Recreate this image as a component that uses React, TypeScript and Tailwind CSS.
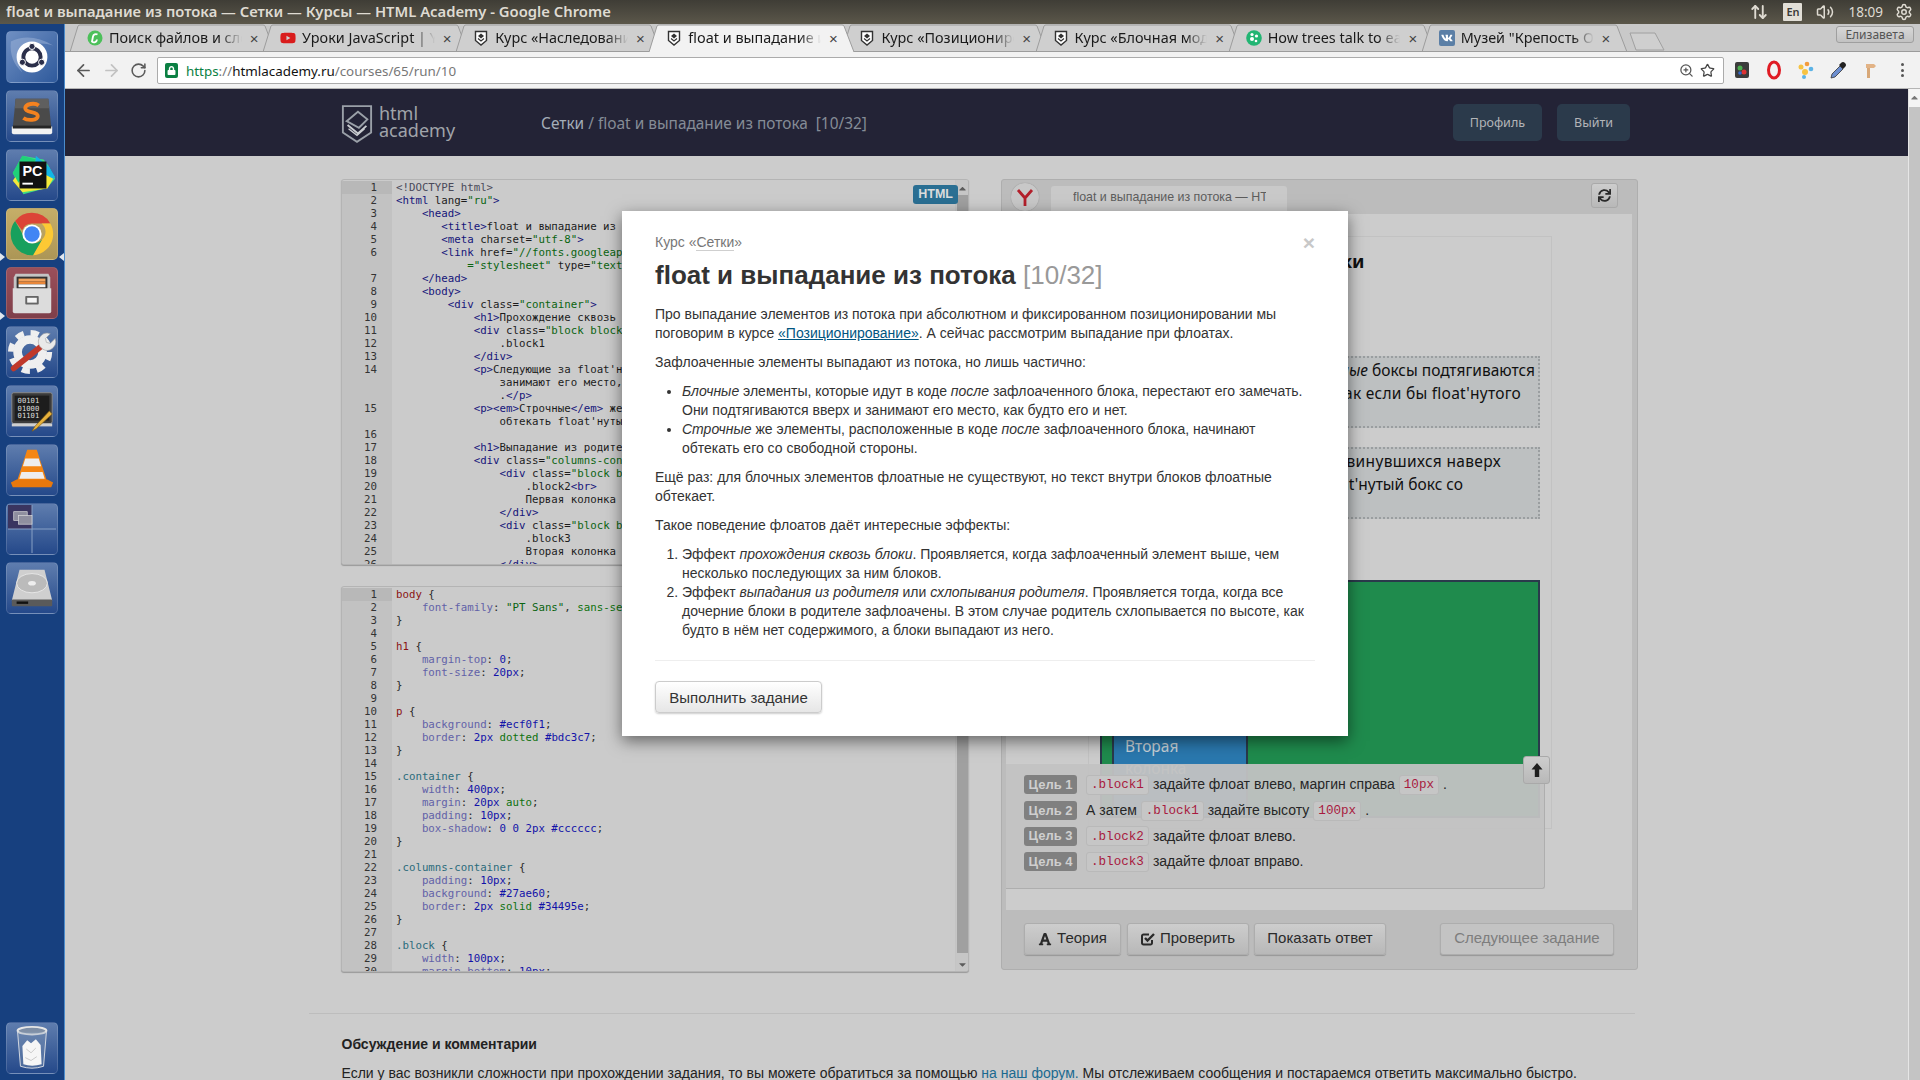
import React from "react";
import { ArrowLeft, ArrowRight, RotateCw, ZoomIn, Star, Volume2, Settings, ArrowUpDown } from "lucide-react";
import { FaFont, FaSync, FaCaretUp, FaCaretDown, FaLock, FaVk, FaYoutube } from "react-icons/fa";

type Tok = [string, string];
const tg = "text-[#15157a]", at = "text-[#1c1c1c]", st = "text-[#0a6410]", tx = "text-[#1c1c1c]";
const pr = "text-[#6262a8]", vl = "text-[#1212a8]", se = "text-[#8a1414]", cl = "text-[#2c6c7c]", kw = "text-[#0e720e]", br = "text-[#2a2a2a]";

type Line = { n: number | null; t: Tok[] };
const L = (n: number | null, ...t: Tok[]): Line => ({ n, t });

const htmlLines: Line[] = [
  L(1, ["<!DOCTYPE html>", "text-[#4a4a5a]"]),
  L(2, ['<html ', tg], ['lang=', at], ['"ru"', st], ['>', tg]),
  L(3, ['    <head>', tg]),
  L(4, ['       <title>', tg], ['float и выпадание из потока', tx], ['</title>', tg]),
  L(5, ['       <meta ', tg], ['charset=', at], ['"utf-8"', st], ['>', tg]),
  L(6, ['       <link ', tg], ['href=', at], ['"//fonts.googleapis.com/css"', st], [' rel', at]),
  L(null, ['           ', tx], ['="stylesheet" ', st], ['type=', at], ['"text/css"', st], ['>', tg]),
  L(7, ['    </head>', tg]),
  L(8, ['    <body>', tg]),
  L(9, ['        <div ', tg], ['class=', at], ['"container"', st], ['>', tg]),
  L(10, ['            <h1>', tg], ['Прохождение сквозь блоки', tx], ['</h1>', tg]),
  L(11, ['            <div ', tg], ['class=', at], ['"block block1"', st], ['>', tg]),
  L(12, ['                .block1', tx]),
  L(13, ['            </div>', tg]),
  L(14, ['            <p>', tg], ["Следующие за float'нутым блоки", tx]),
  L(null, ['                занимают его место, как будто', tx]),
  L(null, ['                .', tx], ['</p>', tg]),
  L(15, ['            <p><em>', tg], ['Строчные', tx], ['</em>', tg], [' же элементы', tx]),
  L(null, ["                обтекать float'нутый бокс", tx]),
  L(16),
  L(17, ['            <h1>', tg], ['Выпадание из родителя', tx], ['</h1>', tg]),
  L(18, ['            <div ', tg], ['class=', at], ['"columns-container"', st], ['>', tg]),
  L(19, ['                <div ', tg], ['class=', at], ['"block block2"', st], ['>', tg]),
  L(20, ['                    .block2', tx], ['<br>', tg]),
  L(21, ['                    Первая колонка', tx]),
  L(22, ['                </div>', tg]),
  L(23, ['                <div ', tg], ['class=', at], ['"block block3"', st], ['>', tg]),
  L(24, ['                    .block3', tx]),
  L(25, ['                    Вторая колонка', tx]),
  L(26, ['                </div>', tg]),
];

const P = (name: string, ...v: Tok[]): Tok[] => [["    " + name, pr], [": ", br], ...v, [";", br]];
const cssLines: Line[] = [
  L(1, ["body", se], [" {", br]),
  L(2, ...P("font-family", ['"PT Sans"', st], [", ", br], ["sans-serif", kw])),
  L(3, ["}", br]),
  L(4),
  L(5, ["h1", se], [" {", br]),
  L(6, ...P("margin-top", ["0", vl])),
  L(7, ...P("font-size", ["20px", vl])),
  L(8, ["}", br]),
  L(9),
  L(10, ["p", se], [" {", br]),
  L(11, ...P("background", ["#ecf0f1", vl])),
  L(12, ...P("border", ["2px", vl], [" ", br], ["dotted", kw], [" ", br], ["#bdc3c7", vl])),
  L(13, ["}", br]),
  L(14),
  L(15, [".container", cl], [" {", br]),
  L(16, ...P("width", ["400px", vl])),
  L(17, ...P("margin", ["20px", vl], [" ", br], ["auto", kw])),
  L(18, ...P("padding", ["10px", vl])),
  L(19, ...P("box-shadow", ["0 0 2px #cccccc", vl])),
  L(20, ["}", br]),
  L(21),
  L(22, [".columns-container", cl], [" {", br]),
  L(23, ...P("padding", ["10px", vl])),
  L(24, ...P("background", ["#27ae60", vl])),
  L(25, ...P("border", ["2px", vl], [" ", br], ["solid", kw], [" ", br], ["#34495e", vl])),
  L(26, ["}", br]),
  L(27),
  L(28, [".block", cl], [" {", br]),
  L(29, ...P("width", ["100px", vl])),
  L(30, ...P("margin-bottom", ["10px", vl])),
];

function Editor({ lines, badge, top }: { lines: Line[]; badge?: boolean; top?: boolean }) {
  return (
    <div className="relative flex h-[386px] w-[628px] overflow-hidden rounded-[3px] border border-[#b4b4b4] bg-[#cbcbcb] shadow-[0_1px_1px_rgba(0,0,0,0.25)]">
      <div className="w-full overflow-hidden pt-px font-['DejaVu_Sans_Mono',monospace] text-[10.75px] leading-[13px]">
        {lines.map((l, i) => (
          <div key={i} className="flex h-[13px]">
            <div className={`w-[50px] shrink-0 pr-[15px] text-right text-[#333] ${i === 0 ? "bg-[#b8b8b8]" : "bg-[#c2c2c2]"}`}>{l.n}</div>
            <div className="whitespace-pre pl-[4px]">
              {l.t.map((k, j) => (
                <span key={j} className={k[1]}>{k[0]}</span>
              ))}
            </div>
          </div>
        ))}
      </div>
      <div className="flex w-[13px] shrink-0 flex-col items-center border-l border-[#c4c4c4] bg-[#c6c6c6] text-[#5c5c5c]">
        <FaCaretUp className="mt-[3px] h-[11px] w-[11px] shrink-0" />
        <div className={`mt-px w-[11px] bg-[#a0a0a0] ${top ? "h-[300px]" : "h-[351px]"}`} />
        {!top && <FaCaretDown className="mt-[6px] h-[11px] w-[11px] shrink-0" />}
      </div>
      {badge && (
        <div className="absolute right-[10px] top-[5px] rounded-[3px] bg-[#2a6f93] px-[5px] font-['Liberation_Sans',sans-serif] text-[12.5px] font-bold leading-[19px] text-[#dcdcdc]">HTML</div>
      )}
    </div>
  );
}

function Fav({ kind }: { kind: string }) {
  if (kind === "shield")
    return (
      <svg viewBox="0 0 16 16" className="h-[16px] w-[16px] shrink-0">
        <path d="M2.5 1.5h11v9L8 15l-5.5-4.5z" fill="#fff" stroke="#333" strokeWidth="1.4" />
        <path d="M5 6l3-2.5L11 6l-3 2.5z" fill="#333" />
        <path d="M5 8.5l3 2.5 3-2.5" fill="none" stroke="#333" strokeWidth="1.2" />
      </svg>
    );
  if (kind === "green")
    return (
      <svg viewBox="0 0 16 16" className="h-[16px] w-[16px] shrink-0">
        <circle cx="8" cy="8" r="7.5" fill="#4cc05a" />
        <path d="M10.5 4.5A3 3 0 0 0 6 6.5L5 11.5A3 3 0 0 0 10 9.5" fill="none" stroke="#fff" strokeWidth="1.8" />
      </svg>
    );
  if (kind === "yt") return <FaYoutube className="h-[16px] w-[16px] shrink-0 text-[#d91c1c]" />;
  if (kind === "ted")
    return (
      <svg viewBox="0 0 16 16" className="h-[16px] w-[16px] shrink-0">
        <circle cx="8" cy="8" r="7.8" fill="#22b573" />
        <circle cx="6" cy="4.5" r="1.6" fill="#fff" /><circle cx="10.5" cy="6" r="1.6" fill="#fff" /><circle cx="6" cy="9" r="2" fill="#fff" /><circle cx="10" cy="11" r="1.3" fill="#fff" />
      </svg>
    );
  return (
    <span className="flex h-[16px] w-[16px] shrink-0 items-center justify-center rounded-[2px] bg-[#5b7fa6] text-white">
      <FaVk className="h-[12px] w-[12px]" />
    </span>
  );
}

function Tab({ title, kind, active }: { title: string; kind: string; active?: boolean }) {
  return (
    <div className={`relative -mr-[11.9px] flex h-[28px] w-[205px] shrink-0 items-center pl-[17px] pr-[16.5px] ${active ? "z-10" : ""}`}>
      <svg viewBox="0 0 205 28" preserveAspectRatio="none" className="absolute inset-0 h-full w-full">
        <path d="M0 28 L8 2 Q8.6 1 10 1 L193 1 Q194.5 1 195 2 L205 28" fill={active ? "#f2f2f2" : "#cfcfcf"} stroke="#9c9c9c" strokeWidth="1" />
        {!active && <path d="M0 27.5H205" stroke="#9c9c9c" />}
      </svg>
      <div className="relative flex min-w-0 flex-1 items-center">
        <Fav kind={kind} />
        <span className="ml-[6px] min-w-0 flex-1 overflow-hidden whitespace-nowrap font-['Noto_Sans',sans-serif] text-[14.4px] leading-[18px] text-[#1a1a1a] [mask-image:linear-gradient(to_right,black_84%,transparent)]">{title}</span>
        <span className="ml-[8px] font-['Liberation_Sans',sans-serif] text-[15px] leading-none text-[#444]">×</span>
      </div>
    </div>
  );
}

function Tile({ className, children }: { className?: string; children: React.ReactNode }) {
  return (
    <div className={`flex h-[52px] w-[52px] shrink-0 items-center justify-center rounded-[5px] border border-white/15 ${className ?? "bg-gradient-to-b from-[#5f7dae] to-[#25498a]"}`}>
      <svg viewBox="0 0 52 52" className="h-[52px] w-[52px]">{children}</svg>
    </div>
  );
}

function Launcher() {
  return (
    <div className="relative flex w-[65px] shrink-0 flex-col items-center gap-[7px] border-r border-[#4b8ccc] bg-[#17407f] pb-[6px] pt-[7px]">
      <Tile className="bg-gradient-to-br from-[#6f8fc2] to-[#2f5a9c]">
        <path d="M4 10q20-10 44 4-20-6-34 6-6 10 2 22Q2 30 4 10z" fill="#9fb6da" fillOpacity=".5" />
        <circle cx="26" cy="26" r="16" fill="#fff" />
        <circle cx="26" cy="26" r="9" fill="none" stroke="#2b2f4a" strokeWidth="4" />
        <circle cx="26" cy="15" r="3.2" fill="#2b2f4a" stroke="#fff" />
        <circle cx="16" cy="31.500" r="3.2" fill="#2b2f4a" stroke="#fff" />
        <circle cx="36" cy="31.500" r="3.2" fill="#2b2f4a" stroke="#fff" />
      </Tile>
      <Tile>
        <path d="M9 8h34l3 30H6z" fill="#4a4a4a" />
        <path d="M9 8h34l1 10H8z" fill="#5f5f5f" />
        <path d="M5 37h42v6a2 2 0 0 1-2 2H7a2 2 0 0 1-2-2z" fill="#f2f2f2" />
        <rect x="6" y="36" width="40" height="3" fill="#262626" />
        <path d="M33 15c-4-3-14-2-14 3 0 5 13 3 13 8 0 5-11 5-15 2" fill="none" stroke="#f5821f" strokeWidth="4" />
      </Tile>
      <Tile>
        <path d="M6 24L16 6l22 4 5 6 7 14-7 8-4 2-22 6z" fill="#3ddc84" />
        <path d="M30 6l14 12 6 10-9 9-13-9z" fill="#12b5e5" />
        <path d="M6 32l10 12 26-4 6-10-30-16z" fill="#f3e93a" />
        <path d="M6 24l10-18 14 4-18 24z" fill="#1fd179" />
        <rect x="13" y="12" width="28" height="28" fill="#111" />
        <text x="16" y="27" fill="#fff" fontSize="15" fontWeight="700" fontFamily="Liberation Sans, sans-serif">PC</text>
        <rect x="16" y="34" width="11" height="2" fill="#fff" />
      </Tile>
      <Tile className="bg-gradient-to-b from-[#c6ae68] to-[#ac9656]">
        <path d="M26 4a22 22 0 0 1 19.05 11H26a11 11 0 0 0-10.3 7.2L8.4 12.6A22 22 0 0 1 26 4z" fill="#dc4437" />
        <path d="M45.05 15A22 22 0 0 1 27 48l9.5-16.4A11 11 0 0 0 36 15z" fill="#fcc934" />
        <path d="M8.4 12.6l9.6 16.7A11 11 0 0 0 36.5 31.6L27 48A22 22 0 0 1 8.4 12.6z" fill="#17a05d" />
        <circle cx="26" cy="26" r="10" fill="#fff" />
        <circle cx="26" cy="26" r="8" fill="#4285f4" />
      </Tile>
      <Tile className="bg-gradient-to-b from-[#9a4f5a] to-[#7f3f4a]">
        <path d="M9 6h34l2 4v34H7V10z" fill="#c4c4c4" />
        <rect x="10" y="9" width="32" height="14" fill="#333" />
        <rect x="12" y="11" width="28" height="3" fill="#f2a35e" />
        <rect x="12" y="14" width="28" height="3" fill="#e8873a" />
        <rect x="12" y="17" width="28" height="3" fill="#f7f7f7" />
        <path d="M6 21h40v24a2 2 0 0 1-2 2H8a2 2 0 0 1-2-2z" fill="#dcdcdc" />
        <rect x="19" y="29" width="14" height="9" rx="1" fill="#666" />
        <rect x="21" y="31" width="10" height="5" fill="#f4f4f4" />
      </Tile>
      <Tile>
        <circle cx="24" cy="26" r="13" fill="none" stroke="#efefef" strokeWidth="9" />
        <circle cx="24" cy="26" r="20" fill="none" stroke="#efefef" strokeWidth="6" strokeDasharray="8.500 7.200" />
        <path d="M7 43L37 19" stroke="#c0392b" strokeWidth="6" strokeLinecap="round" />
        <path d="M34 20a9 9 0 0 1 11-13l-5 5 1 4 4 1 5-5a9 9 0 0 1-13 11z" fill="#e9e9e9" stroke="#999" strokeWidth=".6" />
      </Tile>
      <Tile>
        <rect x="5" y="7" width="42" height="32" rx="2" fill="#3b3b3b" stroke="#8a8a8a" />
        <rect x="8" y="10" width="36" height="26" fill="#1d1d1d" />
        <rect x="5" y="39" width="42" height="3" fill="#cfcfcf" />
        <text x="11" y="18" fill="#ddd" fontSize="7.5" fontFamily="DejaVu Sans Mono, monospace">00101</text>
        <text x="11" y="25.5" fill="#ddd" fontSize="7.5" fontFamily="DejaVu Sans Mono, monospace">01000</text>
        <text x="11" y="33" fill="#ddd" fontSize="7.5" fontFamily="DejaVu Sans Mono, monospace">01101</text>
        <path d="M26 47l5-3 16-15-3-3-15 16z" fill="#e6b13c" stroke="#7a5a15" strokeWidth=".7" />
      </Tile>
      <Tile>
        <path d="M21 5h10l11 34H10z" fill="#f58613" />
        <path d="M19 14h14l2.5 8H16.500z" fill="#eee" />
        <path d="M15 28h22l2.200 7H12.800z" fill="#eee" />
        <path d="M4 39l6-3h32l6 3-2 5H6z" fill="#e8780c" />
      </Tile>
      <Tile>
        <rect x="1" y="1" width="25" height="25" fill="#3a3560" />
        <path d="M26 1v50M1 26h50" stroke="#8aa3c7" strokeWidth="1" />
        <rect x="7" y="8" width="14" height="9" fill="#8f8f9f" stroke="#ddd" strokeWidth=".7" />
        <rect x="12" y="12" width="14" height="9" fill="#8f8f9f" stroke="#ddd" strokeWidth=".7" />
      </Tile>
      <Tile>
        <path d="M13 7h26l8 32H5z" fill="#cfcfcf" />
        <ellipse cx="26" cy="21" rx="16" ry="10" fill="#bbbbbb" stroke="#e6e6e6" />
        <ellipse cx="26" cy="21" rx="4" ry="2.400" fill="#eee" />
        <rect x="5" y="38" width="42" height="7" rx="1" fill="#5a5a5a" />
        <rect x="10" y="40" width="12" height="2.500" fill="#111" />
      </Tile>
      <div className="mt-auto">
        <Tile>
          <ellipse cx="26" cy="8" rx="15" ry="4" fill="#7f8fa6" stroke="#e6e6e6" strokeWidth="2" />
          <path d="M11 9l3 36q12 4 24 0l3-36" fill="#8ba0bb" fillOpacity=".35" stroke="#d6dbe2" />
          <path d="M16 24l5-6 4 3 5-4 5 6 1 20q-10 3-19 0z" fill="#f6f6f6" />
          <path d="M20 27l5 4 5-5M19 36l6 3 6-4" fill="none" stroke="#c9c9c9" />
        </Tile>
      </div>
      <span className="absolute left-0 top-[229px] h-0 w-0 border-y-[4px] border-l-[5px] border-y-transparent border-l-[#dfe6ee]" />
      <span className="absolute left-[59px] top-[229px] h-0 w-0 border-y-[4px] border-r-[5px] border-y-transparent border-r-[#dfe6ee]" />
      <span className="absolute left-0 top-[288px] h-0 w-0 border-y-[4px] border-l-[5px] border-y-transparent border-l-[#dfe6ee]" />
    </div>
  );
}

function Ext({ children }: { children: React.ReactNode }) {
  return <svg viewBox="0 0 20 20" className="h-[20px] w-[20px]">{children}</svg>;
}

function Toolbar() {
  return (
    <div className="flex h-[37px] shrink-0 items-center border-b border-[#b5b5b5] bg-[#f2f2f2]">
      <div className="flex w-[92px] shrink-0 items-center pl-[9px]">
        <ArrowLeft className="h-[19px] w-[19px] text-[#5a5a5a]" strokeWidth={2.2} />
        <ArrowRight className="ml-[9px] h-[19px] w-[19px] text-[#c2c2c2]" strokeWidth={2.2} />
        <RotateCw className="ml-[9px] h-[17px] w-[17px] text-[#5a5a5a]" strokeWidth={2.2} />
      </div>
      <div className="flex h-[27px] w-[1567px] shrink-0 items-center rounded-[2px] border border-[#ababab] bg-white pl-[7px] pr-[8px]">
        <span className="flex h-[15px] w-[13px] items-center justify-center rounded-[2px] bg-[#0b8043] text-white"><FaLock className="h-[9px] w-[9px]" /></span>
        <span className="ml-[8px] flex-1 whitespace-nowrap pt-[2px] font-['Noto_Sans',sans-serif] text-[13.4px] leading-[18px] text-[#777]">
          <span className="text-[#0b8043]">https</span>://<span className="text-[#111]">htmlacademy.ru</span>/courses/65/run/10
        </span>
        <ZoomIn className="h-[15px] w-[15px] text-[#555]" strokeWidth={2} />
        <Star className="ml-[6px] h-[15px] w-[15px] text-[#444]" strokeWidth={2} />
      </div>
      <div className="flex flex-1 items-center gap-[12px] pl-[8px]">
        <Ext><rect x="3" y="2" width="14" height="16" rx="2" fill="#3c3c3c" /><circle cx="8" cy="8" r="2.500" fill="#4caf50" /><circle cx="12" cy="12" r="2.500" fill="#d33" /><circle cx="8" cy="13" r="1.800" fill="#36c" /></Ext>
        <Ext><ellipse cx="10" cy="10" rx="5.500" ry="8" fill="none" stroke="#e01b24" strokeWidth="3" /></Ext>
        <Ext><circle cx="5" cy="7" r="2.500" fill="#f6c343" /><circle cx="11" cy="4" r="2.300" fill="#f39c3d" /><circle cx="15" cy="9" r="2.300" fill="#5cb3e6" /><circle cx="9" cy="12" r="3" fill="#f6c343" /><circle cx="8" cy="17" r="2" fill="#5cb3e6" /></Ext>
        <Ext><path d="M3 18l1-4 8-8 3 3-8 8z" fill="#6d8fd0" stroke="#333" strokeWidth=".8" /><path d="M11 5l2-2a2 2 0 0 1 4 4l-2 2z" fill="#222" /></Ext>
        <Ext><rect x="7" y="5" width="3" height="13" fill="#d8a878" /><path d="M6 4h8l2 2-2 2H6z" fill="#e2b386" /></Ext>
        <div className="flex w-[20px] flex-col items-center gap-[2.5px]"><i className="block h-[3px] w-[3px] rounded-full bg-[#555]" /><i className="block h-[3px] w-[3px] rounded-full bg-[#555]" /><i className="block h-[3px] w-[3px] rounded-full bg-[#555]" /></div>
      </div>
    </div>
  );
}

function TopPanel() {
  return (
    <div className="flex h-[24px] shrink-0 items-center bg-gradient-to-b from-[#3f3d36] to-[#5b574a] pl-[6px] pr-[7px] font-['Noto_Sans',sans-serif] text-[#dfdbd2]">
      <span className="flex-1 whitespace-nowrap pb-[2px] text-[14.8px] font-semibold leading-[22px]">float и выпадание из потока — Сетки — Курсы — HTML Academy - Google Chrome</span>
      <ArrowUpDown className="mr-[15px] h-[18px] w-[18px]" strokeWidth={2.5} />
      <span className="mr-[14px] flex h-[18px] w-[19px] items-center justify-center rounded-[1px] bg-[#e2dfd7] text-[11px] font-semibold text-[#3c3b37]">En</span>
      <Volume2 className="mr-[14px] h-[18px] w-[18px]" strokeWidth={2} />
      <span className="mr-[12px] text-[13.5px] leading-[24px]">18:09</span>
      <Settings className="h-[18px] w-[18px]" strokeWidth={2} />
    </div>
  );
}

function Tabs() {
  return (
    <div className="relative flex h-[28px] shrink-0 bg-[#c9c9c9] pl-[5px]">
      <div className="absolute bottom-0 left-0 right-0 h-px bg-[#9c9c9c]" />
      <Tab kind="green" title="Поиск файлов и сложных задач" />
      <Tab kind="yt" title="Уроки JavaScript | YouTube" />
      <Tab kind="shield" title="Курс «Наследование»" />
      <Tab kind="shield" title="float и выпадание из потока" active />
      <Tab kind="shield" title="Курс «Позиционирование»" />
      <Tab kind="shield" title="Курс «Блочная модель»" />
      <Tab kind="ted" title="How trees talk to each other" />
      <Tab kind="vk" title='Музей "Крепость Орешек"' />
      <svg viewBox="0 0 36 20" className="relative ml-[14px] mt-[8px] h-[20px] w-[36px]">
        <path d="M1 1H26L35 18H7z" fill="#cfcfcf" stroke="#a0a0a0" />
      </svg>
      <div className="absolute right-[6px] top-[2px] w-[78px] rounded-[3px] border border-[#9f9f9f] bg-gradient-to-b from-[#d8d8d8] to-[#c2c2c2] text-center font-['Noto_Sans',sans-serif] text-[12px] leading-[15px] text-[#555]">Елизавета</div>
    </div>
  );
}

function Logo() {
  return (
    <div className="flex items-center pt-[3px]">
      <svg viewBox="0 0 34 42" className="h-[40px] w-[32px]">
        <path d="M2 2h30v28L17 40 2 30z" fill="none" stroke="#9aa0a8" strokeWidth="2" />
        <path d="M6 18L18 8l10 8-9 9z" fill="none" stroke="#9aa0a8" strokeWidth="2" />
        <path d="M7 22l11 9 9-8" fill="none" stroke="#c9ccd0" strokeWidth="2" />
        <path d="M8 26l9 7 8-7" fill="none" stroke="#c9ccd0" strokeWidth="1.500" />
      </svg>
      <div className="mb-[5px] ml-[6px] font-['Noto_Sans',sans-serif] text-[18px] leading-[17px] text-[#a0a4aa]">
        <div>html</div>
        <div>academy</div>
      </div>
    </div>
  );
}

function Header() {
  return (
    <div className="flex h-[67px] shrink-0 items-center bg-[#232336] pl-[276px] pr-[278px]">
      <Logo />
      <div className="ml-[86px] flex-1 whitespace-nowrap pt-[2px] font-['Noto_Sans',sans-serif] text-[15.4px] leading-[20px] text-[#858c96]">
        <span className="text-[#a3adb8]">Сетки</span> / float и выпадание из потока &nbsp;[10/32]
      </div>
      <div className="rounded-[5px] bg-[#2b3a4b] px-[17px] font-['Noto_Sans',sans-serif] text-[12.5px] leading-[37px] text-[#b3b5b8]">Профиль</div>
      <div className="ml-[15px] rounded-[5px] bg-[#2b3a4b] px-[17px] font-['Noto_Sans',sans-serif] text-[12.5px] leading-[37px] text-[#b3b5b8]">Выйти</div>
    </div>
  );
}

function Btn({ children, disabled, w }: { children: React.ReactNode; disabled?: boolean; w: string }) {
  return (
    <div className={`flex h-[32px] items-center justify-center gap-[5px] rounded-[3px] border border-[#adadad] text-[15px] shadow-[0_1px_1px_rgba(0,0,0,0.2)] ${w} ${disabled ? "bg-[#c3c3c3] text-[#7d7d7d]" : "bg-gradient-to-b from-[#cdcdcd] to-[#b8b8b8] text-[#2a2a2a]"}`}>
      {children}
    </div>
  );
}

function Pill({ children }: { children: React.ReactNode }) {
  return <span className="mx-[4px] inline-flex h-[20px] items-center rounded-[3px] border border-[#b9b9b9] bg-[#c6c6c6] px-[4px] pt-[2px] font-['Liberation_Mono',monospace] text-[12.6px] text-[#a81a3e]">{children}</span>;
}

function Goal({ n, children }: { n: number; children: React.ReactNode }) {
  return (
    <div className="flex h-[25.7px] items-center whitespace-pre text-[14px] text-[#262626]">
      <span className="mr-[5px] flex h-[19px] w-[53px] items-center justify-center rounded-[3px] bg-[#808080] text-[13px] font-bold text-[#cfcfcf]">Цель {n}</span>
      {children}
    </div>
  );
}

function Preview() {
  return (
    <div className="flex h-[791px] w-[637px] flex-col overflow-hidden rounded-[3px] border border-[#aeaeae] bg-[#bcbcbc] font-['Liberation_Sans',sans-serif]">
      <div className="relative flex h-[34px] shrink-0 items-end pl-[49px] pr-[19px]">
        <div className="absolute left-[9px] top-[3px] flex h-[28px] w-[28px] items-center justify-center rounded-full bg-[#c8c8c8] shadow-[0_0_1px_rgba(0,0,0,0.3)]">
          <svg viewBox="0 0 20 20" className="h-[20px] w-[20px]"><path d="M3 3l7 8 7-8M10 11v8" fill="none" stroke="#b3202b" strokeWidth="2.800" /></svg>
        </div>
        <div className="h-[28px] w-[236px] rounded-t-[3px] bg-[#c9c9c9] pl-[22px] pr-[21px]">
          <div className="overflow-hidden whitespace-nowrap text-[12.4px] leading-[22px] text-[#5d5d5d]">float и выпадание из потока — HTML Academy</div>
        </div>
        <div className="ml-auto mb-[6px] flex h-[25px] w-[27px] items-center justify-center rounded-[3px] border border-[#a9a9a9] bg-gradient-to-b from-[#cdcdcd] to-[#b8b8b8] text-[#2a2a2a]"><FaSync className="h-[13px] w-[13px]" /></div>
      </div>
      <div className="relative mx-[4px] mr-[5px] flex-1 overflow-hidden bg-[#cccccc] pl-[82px] pt-[22px]">
        <div className="h-[593px] w-[464px] overflow-hidden border border-[#c2c2c2] px-[11px] pt-[10px] font-['Noto_Sans',sans-serif] text-[#111]">
          <div className="whitespace-nowrap text-[18.5px] font-bold leading-[28px]">Прохождение сквозь блоки</div>
          <div className="mt-[81px] h-[72px] border-2 border-dotted border-[#9a9ea0] bg-[#bdc0c1] pt-[1px] text-[15.500px] leading-[23px]">
            <div className="whitespace-nowrap pr-[3px] text-right"><em>Строчные</em> боксы подтягиваются</div>
            <div className="whitespace-nowrap pr-[17px] text-right tracking-[0.25px]">как если бы float'нутого</div>
          </div>
          <div className="mt-[19px] h-[72px] border-2 border-dotted border-[#9a9ea0] bg-[#bdc0c1] pt-[1px] text-[15.500px] leading-[23px]">
            <div className="whitespace-nowrap pr-[37px] text-right tracking-[0.35px]">подвинувшихся наверх</div>
            <div className="whitespace-nowrap pr-[75px] text-right">float'нутый бокс со</div>
          </div>
          <div className="mt-[61px] flex h-[238px] items-stretch border-2 border-[#2a3a4b] bg-[#1f8b4d] pl-[10px]">
            <div className="flex w-[136px] flex-col justify-end border-x-2 border-[#2a3a4b] bg-[#2a78ae] pb-[37px] pl-[11px] text-[15.500px] leading-[22px] text-[#c8d2d8]">
              <div>Вторая</div>
              <div>колонка</div>
            </div>
          </div>
        </div>
        <div className="absolute left-0 top-[550px] h-[125px] w-[539px] rounded-br-[3px] border-b border-r border-[#aeaeae] bg-[#c2c2c2]/95 pl-[18px] pt-[8px]">
          <Goal n={1}><Pill>.block1</Pill>задайте флоат влево, маргин справа<Pill>10px</Pill>.</Goal>
          <Goal n={2}><span className="ml-[4px]">А затем</span><Pill>.block1</Pill>задайте высоту<Pill>100px</Pill>.</Goal>
          <Goal n={3}><Pill>.block2</Pill>задайте флоат влево.</Goal>
          <Goal n={4}><Pill>.block3</Pill>задайте флоат вправо.</Goal>
        </div>
        <div className="absolute left-[517px] top-[542px] flex h-[28px] w-[27px] items-center justify-center rounded-[3px] border border-[#a9a9a9] bg-gradient-to-b from-[#cdcdcd] to-[#b8b8b8]">
          <svg viewBox="0 0 12 14" className="h-[14px] w-[12px]"><path d="M6 0L11.500 6.500H8.200V14H3.800V6.500H.5z" fill="#1f1f1f" /></svg>
        </div>
      </div>
      <div className="flex h-[59px] shrink-0 items-center pb-[2px] pl-[22px] pr-[23px]">
        <Btn w="w-[97px]"><FaFont className="h-[14px] w-[14px]" />Теория</Btn>
        <div className="w-[6px]" />
        <Btn w="w-[122px]">
          <svg viewBox="0 0 14 14" className="h-[14px] w-[14px]"><path d="M11 8v3a1.500 1.500 0 0 1-1.500 1.500h-7A1.500 1.500 0 0 1 1 11V4a1.500 1.500 0 0 1 1.500-1.500H8" fill="none" stroke="#2a2a2a" strokeWidth="2" /><path d="M4 6l2.500 2.500L13 2" fill="none" stroke="#2a2a2a" strokeWidth="2.400" /></svg>
          Проверить
        </Btn>
        <div className="w-[5px]" />
        <Btn w="w-[132px]">Показать ответ</Btn>
        <div className="flex-1" />
        <Btn w="w-[174px]" disabled>Следующее задание</Btn>
      </div>
    </div>
  );
}

function Modal() {
  return (
    <div className="absolute left-[557px] top-[122px] z-20 h-[525px] w-[726px] bg-white px-[33px] pt-[22px] font-['Liberation_Sans',sans-serif] text-[14px] leading-[19px] text-[#333] shadow-[0_5px_15px_rgba(0,0,0,0.5)]">
      <div className="absolute right-[33px] top-[16px] text-[21px] font-bold leading-[32px] text-[#c8c8c8]">×</div>
      <div className="text-[#777]">Курс «<span className="border-b border-[#cfcfcf]">Сетки</span>»</div>
      <div className="mb-[13px] mt-[7px] whitespace-nowrap text-[26px] font-bold leading-[33px]">float и выпадание из потока <span className="font-normal text-[#999]">[10/32]</span></div>
      <p className="mb-[10px]">Про выпадание элементов из потока при абсолютном и фиксированном позиционировании мы поговорим в курсе <span className="text-[#005580] underline">«Позиционирование»</span>. А сейчас рассмотрим выпадание при флоатах.</p>
      <p className="mb-[10px]">Зафлоаченные элементы выпадают из потока, но лишь частично:</p>
      <ul className="mb-[10px] list-disc pl-[27px]">
        <li><em>Блочные</em> элементы, которые идут в коде <em>после</em> зафлоаченного блока, перестают его замечать. Они подтягиваются вверх и занимают его место, как будто его и нет.</li>
        <li><em>Строчные</em> же элементы, расположенные в коде <em>после</em> зафлоаченного блока, начинают обтекать его со свободной стороны.</li>
      </ul>
      <p className="mb-[10px]">Ещё раз: для блочных элементов флоатные не существуют, но текст внутри блоков флоатные обтекает.</p>
      <p className="mb-[10px]">Такое поведение флоатов даёт интересные эффекты:</p>
      <ol className="list-decimal pl-[27px]">
        <li>Эффект <em>прохождения сквозь блоки</em>. Проявляется, когда зафлоаченный элемент выше, чем несколько последующих за ним блоков.</li>
        <li>Эффект <em>выпадания из родителя</em> или <em>схлопывания родителя</em>. Проявляется тогда, когда все дочерние блоки в родителе зафлоачены. В этом случае родитель схлопывается по высоте, как будто в нём нет содержимого, а блоки выпадают из него.</li>
      </ol>
      <div className="mt-[20px] border-t border-[#eeeeee] pt-[20px]">
        <div className="inline-flex h-[32px] w-[167px] items-center justify-center rounded-[4px] border border-[#cccccc] bg-gradient-to-b from-white to-[#e6e6e6] text-[15px] text-[#333] shadow-[0_1px_2px_rgba(0,0,0,0.2)]">Выполнить задание</div>
      </div>
    </div>
  );
}

export default function App() {
  return (
    <div className="flex h-[1080px] w-[1920px] flex-col overflow-hidden bg-[#cccccc]">
      <TopPanel />
      <div className="flex min-h-0 flex-1">
        <Launcher />
        <div className="flex min-w-0 flex-1 flex-col">
          <Tabs />
          <Toolbar />
          <div className="relative flex min-h-0 flex-1">
            <div className="min-w-0 flex-1 overflow-hidden">
              <Header />
              <div className="flex gap-[32px] pl-[276px] pt-[23px]">
                <div className="flex flex-col gap-[21px]">
                  <Editor lines={htmlLines} badge top />
                  <Editor lines={cssLines} />
                </div>
                <Preview />
              </div>
              <div className="ml-[244px] mt-[41px] w-[1326px] border-t border-[#bdbdbd] pl-[32.5px] pt-[20px] font-['Liberation_Sans',sans-serif] text-[14px] leading-[20px] text-[#222]">
                <div className="font-bold">Обсуждение и комментарии</div>
                <div className="mt-[9px] whitespace-nowrap">Если у вас возникли сложности при прохождении задания, то вы можете обратиться за помощью <span className="text-[#1a6a90]">на наш форум.</span> Мы отслеживаем сообщения и постараемся ответить максимально быстро.</div>
              </div>
            </div>
            <div className="flex w-[12px] shrink-0 flex-col items-center border-l border-[#e6e6e6] bg-[#f4f4f4]">
              <FaCaretUp className="mt-[3px] h-[11px] w-[11px] text-[#777]" />
              <div className="mt-[4px] w-[11px] flex-1 bg-[#c4c4c4]" />
            </div>
            <Modal />
          </div>
        </div>
      </div>
    </div>
  );
}
